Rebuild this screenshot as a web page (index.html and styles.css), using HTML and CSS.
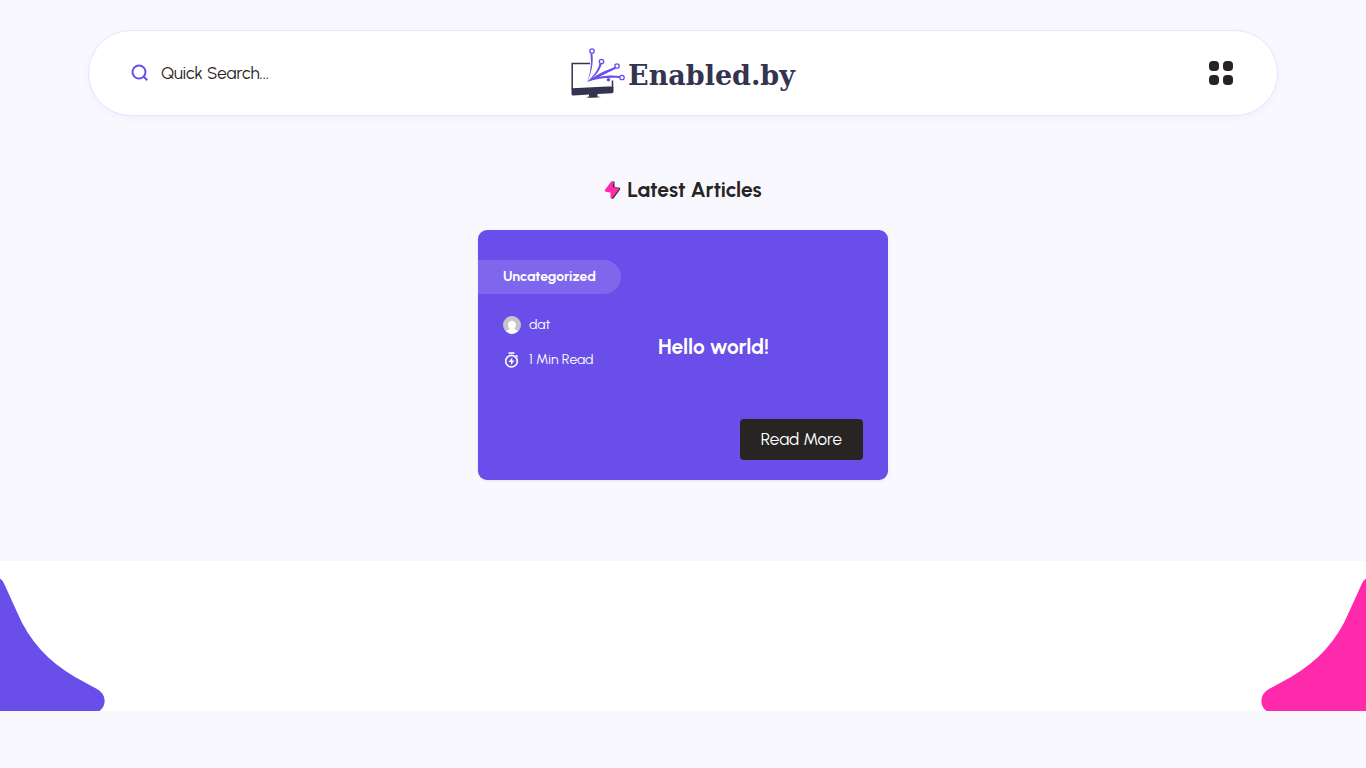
FILE: index.html
```html
<!DOCTYPE html>
<html lang="en">
<head>
    <meta charset="UTF-8">
    <meta name="viewport" content="width=device-width, initial-scale=1.0">
    <title>Enabled.by</title>
    <link rel="stylesheet" href="styles.css">
</head>
<body>
    <header class="header">
        <form class="search">
            <label for="search" aria-label="Quick Search">
                <svg class="search-icon" viewBox="0 0 18 18" width="18" height="18">
                    <circle cx="8" cy="8" r="6.500"/>
                    <path d="M12.500 12.500L16.300 16.300"/>
                </svg>
            </label>
            <input type="search" id="search" placeholder="Quick Search...">
        </form>
        <a href="#" class="logo">
            <svg class="logo-icon" viewBox="-1 1 56 52" width="56" height="52">
                <path class="screen" d="M20 17.500H2.200V43L42.500 41V34.500"/>
                <path class="stand" d="M1.500 43L43.500 41V45.500Q43.500 47 42 47.200L27.500 48V50.500L31 51Q23 52.300 16 51.200L19 50.500V48.500L3.500 49.500Q1.500 49.600 1.500 48z"/>
                <path class="beam" d="M17 36C22 26 23.500 17 22.400 7.500L20.400 7.700C21.500 17 21 26 17 36zM17 36C27 29 29.500 25 31.700 18L29.500 17.500C28 24 25 28 17 36zM17 36C29 32 34 28 45.800 22.800L44.800 21C33 25.500 26 28.500 17 36zM17 36C29 32.300 38 31 50.800 32.300L51 30.200C37 28.500 29 30 17 36z"/>
                <circle class="node" cx="22" cy="5" r="2.200"/>
                <circle class="node" cx="31.500" cy="15.500" r="2.200"/>
                <circle class="node" cx="47" cy="20" r="2.200"/>
                <circle class="node" cx="52" cy="31.500" r="2.200"/>
                <circle class="dot" cx="38.500" cy="33.700" r="1.800"/>
            </svg>
            <span class="logo-text">Enabled.by</span>
        </a>
        <button type="button" class="menu-button" aria-label="Menu">
            <span></span><span></span><span></span><span></span>
        </button>
    </header>

    <main class="articles">
        <h1 class="section-title">
            <svg viewBox="0 0 17 20" width="17" height="20">
                <path fill="#282424" d="M9.500 1L10.500 1.500V7L15.500 7.800Q16.700 8.300 16 9.500L9.500 18.500L7.500 18.800z"/>
                <path fill="#ff29ac" d="M9 1.500V7.200L14.300 7.800Q15.500 8.200 14.800 9.400L8.500 18Q6.800 19.400 6.500 17.500V12.500L1.500 11.700Q0.200 11 1 9.800L7 1.800Q8.400 0.300 9 1.500z"/>
            </svg>
            Latest Articles
        </h1>
        <article class="card">
            <div class="card-meta">
                <a href="#" class="category">Uncategorized</a>
                <a href="#" class="meta-item">
                    <svg viewBox="0 0 18 18" width="18" height="18">
                        <circle cx="9" cy="9" r="9" fill="#c5c5c5"/>
                        <path fill="#fff" d="M9 4.700c2.500 0 4 1.700 4 4.100 0 1.700-.7 3-1.700 3.800.2 1.200 1.700 1.500 3.500 2.300A8.900 8.900 0 0 1 9 18a8.900 8.900 0 0 1-5.800-3.100c1.800-.8 3.300-1.100 3.500-2.300C5.700 11.800 5 10.500 5 8.800c0-2.400 1.500-4.100 4-4.100z"/>
                    </svg>
                    dat
                </a>
                <span class="meta-item">
                    <svg viewBox="0 0 18 18" width="18" height="18">
                        <circle cx="8.500" cy="10.200" r="5.800" fill="none" stroke="#fff" stroke-width="1.600"/>
                        <path fill="none" stroke="#fff" stroke-width="1.500" d="M5.500 2H11.500M13 4.200L14.600 5.800"/>
                        <path fill="#fff" d="M9.200 6.500L5.500 11H8V14L11.500 9.500H9.200z"/>
                    </svg>
                    1 Min Read
                </span>
            </div>
            <h2 class="card-title">Hello world!</h2>
            <a href="#" class="read-more">Read More</a>
        </article>
    </main>

    <footer class="footer">
        <svg class="wave" viewBox="0 0 105 150" width="105" height="150">
            <path d="M0 17.500Q2.500 19 4.500 23.500L17 51C29 80 49 101 75 116L97 128Q104.500 132 104.700 140Q104.500 146 99.500 150H0z"/>
        </svg>
        <svg class="wave wave-right" viewBox="0 0 105 150" width="105" height="150">
            <path d="M105 17.500Q102.500 19 100.500 23.500L88 51C76 80 56 101 30 116L8 128Q0.500 132 0.300 140Q0.500 146 5.500 150H105z"/>
        </svg>
    </footer>
</body>
</html>
```
FILE: styles.css
```css
* {
    box-sizing: border-box;
}

body {
    margin: 0;
    background-color: #f9f8ff;
    color: #282424;
    font-family: Urbanist, Lato, sans-serif;
    font-size: 17px;
    line-height: 24px;
}

a {
    color: inherit;
    text-decoration: none;
}

.header {
    display: grid;
    grid-template-columns: 1fr auto 1fr;
    align-items: center;
    max-width: 1190px;
    margin: 30px auto 0;
    padding: 16px 44px 16px 42px;
    background-color: #fff;
    border: 1px solid #e8e4ff;
    border-radius: 43px;
    box-shadow: 0 2px 6px rgba(105, 78, 233, 0.06);
}

.search {
    display: flex;
    align-items: center;
    gap: 12px;
}

.search label {
    display: flex;
}

.search-icon {
    fill: none;
    stroke: #694ee9;
    stroke-width: 2;
}

.search input {
    width: 180px;
    padding: 0;
    border: none;
    outline: none;
    background: none;
    font: inherit;
    color: #282424;
}

.search input::placeholder {
    color: #282424;
    opacity: 1;
}

.logo {
    display: flex;
    align-items: center;
    gap: 3px;
}

.screen {
    fill: none;
    stroke: #343350;
    stroke-width: 1.5;
}

.stand {
    fill: #343350;
}

.beam,
.dot {
    fill: #694ee9;
}

.node {
    fill: #fff;
    stroke: #694ee9;
    stroke-width: 1.3;
}

.logo-text {
    padding-top: 6px;
    font-family: "Roboto Slab", "DejaVu Serif", serif;
    font-size: 27px;
    font-weight: bold;
    color: #343350;
}

.menu-button {
    display: grid;
    grid-template-columns: 10px 10px;
    gap: 4px;
    justify-self: end;
    padding: 0;
    border: none;
    background: none;
    cursor: pointer;
}

.menu-button span {
    height: 10px;
    border-radius: 4px;
    background-color: #282424;
}

.articles {
    display: flex;
    flex-direction: column;
    align-items: center;
    padding: 62px 20px 81px;
}

.section-title {
    display: flex;
    align-items: center;
    gap: 6px;
    margin: 0 0 28px;
    font-size: 21px;
    line-height: 24px;
}

.card {
    display: grid;
    grid-template-columns: 180px 1fr;
    grid-template-rows: 1fr auto;
    width: 100%;
    max-width: 410px;
    padding: 30px 25px 20px 0;
    background-color: #694ee9;
    border-radius: 9px;
    box-shadow: 0 1px 3px rgba(105, 78, 233, 0.12);
    color: #fff;
}

.card-meta {
    display: flex;
    flex-direction: column;
    align-items: flex-start;
    font-size: 14px;
}

.category {
    margin-bottom: 19px;
    padding: 5px 25px;
    background-color: rgba(255, 255, 255, 0.14);
    border-radius: 0 17px 17px 0;
    font-weight: bold;
}

.meta-item {
    display: flex;
    align-items: center;
    gap: 8px;
    margin: 0 0 11px 25px;
}

.card-title {
    margin: 0;
    padding: 75px 0 60px;
    font-size: 21px;
    line-height: 24px;
}

.read-more {
    grid-column: 2;
    justify-self: end;
    padding: 8px 21px 9px;
    border-radius: 4px;
    background-color: #282424;
}

.footer {
    display: flex;
    justify-content: space-between;
    background-color: #fff;
    box-shadow: 0 1px 4px rgba(105, 78, 233, 0.06);
}

.wave {
    fill: #694ee9;
}

.wave-right {
    fill: #ff29ac;
}
```
